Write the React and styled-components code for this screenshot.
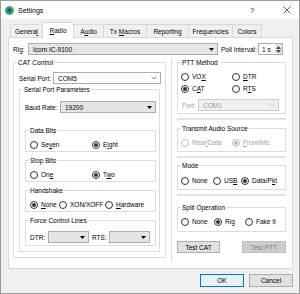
import React from 'react';
import styled, { createGlobalStyle } from 'styled-components';

const Global = createGlobalStyle`
  html, body { margin: 0; padding: 0; background: #fff; }
  body { font-family: "Liberation Sans", Arial, sans-serif; font-size: 6.5px; color: #000; }
  * { box-sizing: border-box; }
`;

const Window = styled.div`
  width: 300px; height: 294px; border: 1px solid #9c9c9c;
  display: flex; flex-direction: column; background: #f0f0f0;
`;
const TitleBar = styled.div`
  height: 18px; flex: none; background: #fff; display: flex; align-items: center; padding-left: 4px;
`;
const TitleText = styled.span`
  margin-left: 4px; font-size: 7px; color: #000;
`;
const TitleBtn = styled.span`
  width: ${p => p.$w}px; margin-left: ${p => p.$ml || 0}px; margin-right: ${p => p.$mr || 0}px;
  display: flex; align-items: center; justify-content: center; font-size: 7.5px; color: #222;
`;
const Spacer = styled.div` flex: 1; `;

const Body = styled.div`
  flex: 1; display: flex; flex-direction: column; padding: 3px 6px 0 7px;
`;
const TabBar = styled.div`
  height: 16px; display: flex; align-items: flex-end; padding-left: 2px;
  margin-bottom: -1px; position: relative; z-index: 1;
`;
const Tab = styled.div`
  width: ${p => p.$w}px; height: ${p => (p.$active ? 16 : 14)}px;
  margin-left: -1px; &:first-child { margin-left: 0; }
  border: 1px solid #d9d9d9; border-bottom: ${p => (p.$active ? 'none' : '1px solid #d9d9d9')};
  background: ${p => (p.$active ? '#fff' : '#f0f0f0')};
  position: relative; z-index: ${p => (p.$active ? 2 : 1)};
  display: flex; align-items: center; justify-content: center;
  padding-bottom: ${p => (p.$active ? 1 : 0)}px; white-space: nowrap;
`;
const Pane = styled.div`
  background: #fff; border: 1px solid #d9d9d9; padding: 5px 6px 6px 4px;
  display: flex; flex-direction: column;
`;
const Row = styled.div`
  display: flex; align-items: center; height: ${p => p.$h || 12}px;
  margin-top: ${p => p.$mt || 0}px; padding-left: ${p => p.$pl || 0}px;
`;
const Label = styled.span`
  width: ${p => p.$w}px; flex: none; margin-left: ${p => p.$ml || 0}px; white-space: nowrap;
  color: ${p => (p.$disabled ? '#a0a0a0' : '#000')};
`;
const ComboBox = styled.div`
  height: ${p => p.$h || 12}px; ${p => (p.$w ? `width: ${p.$w}px; flex: none;` : 'flex: 1;')}
  margin-right: ${p => p.$mr || 0}px;
  display: flex; align-items: center; justify-content: space-between; padding: 0 3px 0 4px;
  border: 1px solid ${p => (p.$kind === 'disabled' ? '#cccccc' : '#adadad')};
  background: ${p => (p.$kind === 'edit' ? '#fff' : p.$kind === 'disabled' ? '#f0f0f0' : '#e5e5e5')};
  color: ${p => (p.$kind === 'disabled' ? '#9a9a9a' : '#000')}; white-space: nowrap;
`;
const SpinBox = styled.div`
  width: 25px; height: 12px; flex: none; margin-right: 3px; border: 1px solid #adadad; background: #fff;
  display: flex; align-items: center; justify-content: space-between; padding-left: 3px;
`;
const SpinArrows = styled.div`
  width: 7px; height: 10px; background: #e6e6e6; display: flex; flex-direction: column;
  align-items: center; justify-content: space-around; padding: 1px 0;
`;

const MainRow = styled.div` display: flex; margin-top: 3px; align-items: flex-start; `;
const LeftCol = styled.div` width: 153px; flex: none; display: flex; flex-direction: column; `;
const RightCol = styled.div`
  flex: 1; margin-left: 5px; border-left: 1px solid #dcdcdc; padding: 0 0 9px 5px;
  display: flex; flex-direction: column; align-self: stretch;
`;

const Group = styled.fieldset`
  margin: ${p => p.$m || '0'}; padding: 0; border: 1px solid #dcdcdc; min-width: 0;
`;
const Legend = styled.legend`
  padding: 0 1px; margin-left: 3px; height: 9px; line-height: 9px; white-space: nowrap;
`;
const GroupBody = styled.div`
  padding: ${p => p.$pad};
  display: flex; flex-direction: column;
`;
const Section = styled.div`
  padding-bottom: 4px; border-bottom: 2px solid #e3e3e3; margin-top: ${p => p.$mt || 0}px;
`;
const RadioRow = styled.div`
  display: flex; align-items: center; height: 10px; margin-top: ${p => p.$mt || 0}px;
`;
const RadioOpt = styled.label`
  display: flex; align-items: center; height: 10px; line-height: 10px; flex: none;
  ${p => (p.$w ? `width: ${p.$w}px;` : '')}
  color: ${p => (p.$disabled ? '#a0a0a0' : '#000')}; white-space: nowrap;
`;
const Circle = styled.span`
  width: 8px; height: 8px; border-radius: 50%; flex: none; margin-right: 3px; background: #fff;
  border: 1px solid ${p => (p.$disabled ? '#bcbcbc' : '#333')};
  display: flex; align-items: center; justify-content: center;
  &::after {
    content: ''; width: 4px; height: 4px; border-radius: 50%;
    background: ${p => (p.$checked ? (p.$disabled ? '#bcbcbc' : '#333') : 'transparent')};
  }
`;
const U = styled.span` text-decoration: underline; `;

const ButtonRow = styled.div`
  display: flex; justify-content: ${p => p.$justify || 'flex-end'}; gap: 5px; margin-top: ${p => p.$mt || 0}px;
`;
const Button = styled.div`
  width: ${p => p.$w}px; height: ${p => p.$h || 12}px; display: flex; align-items: center; justify-content: center;
  border: 1px solid ${p => (p.$default ? '#0078d7' : p.$disabled ? '#bfbfbf' : '#adadad')};
  background: ${p => (p.$default ? '#e5f1fb' : p.$disabled ? '#cccccc' : '#e1e1e1')};
  color: ${p => (p.$disabled ? '#838383' : '#000')}; white-space: nowrap;
`;

const Tri = ({ up, color = '#000' }) => (
  <svg width="5" height="3" viewBox="0 0 5 3">
    <polygon points={up ? '0,3 5,3 2.5,0' : '0,0 5,0 2.5,3'} fill={color} />
  </svg>
);
const Chevron = ({ color = '#707070' }) => (
  <svg width="6" height="4" viewBox="0 0 6 4">
    <polyline points="0.5,0.5 3,3 5.5,0.5" fill="none" stroke={color} strokeWidth="0.8" />
  </svg>
);

const Combo = ({ kind = 'gray', text = '', ...rest }) => (
  <ComboBox $kind={kind} {...rest}>
    <span>{text}</span>
    {kind === 'gray' ? <Tri /> : <Chevron color={kind === 'disabled' ? '#c4c4c4' : '#707070'} />}
  </ComboBox>
);

const Radio = ({ children, checked, disabled, w }) => (
  <RadioOpt $w={w} $disabled={disabled}>
    <Circle $checked={checked} $disabled={disabled} />
    <span>{children}</span>
  </RadioOpt>
);

const AppIcon = () => (
  <svg width="9" height="9" viewBox="0 0 9 9">
    <defs>
      <radialGradient id="ic" cx="50%" cy="50%" r="50%">
        <stop offset="0" stopColor="#0d3f8f" />
        <stop offset="0.45" stopColor="#1f6fd6" />
        <stop offset="0.7" stopColor="#28b04a" />
        <stop offset="1" stopColor="#5bc24f" />
      </radialGradient>
    </defs>
    <circle cx="4.5" cy="4.5" r="4.5" fill="url(#ic)" />
  </svg>
);
const CloseIcon = () => (
  <svg width="8" height="8" viewBox="0 0 8 8">
    <path d="M0.5 0.5 L7.5 7.5 M7.5 0.5 L0.5 7.5" stroke="#333" strokeWidth="0.8" />
  </svg>
);

const tabs = [
  ['General', 33], ['Radio', 32], ['Audio', 31], ['Tx Macros', 44],
  ['Reporting', 43], ['Frequencies', 45], ['Colors', 30],
];
const tabLabel = {
  General: <>Genera<U>l</U></>,
  Radio: <><U>R</U>adio</>,
  Audio: <>A<U>u</U>dio</>,
  'Tx Macros': <>Tx <U>M</U>acros</>,
  Reporting: 'Reporting',
  Frequencies: 'Frequencies',
  Colors: 'Colors',
};

export default function App() {
  return (
    <>
      <Global />
      <Window>
        <TitleBar>
          <AppIcon />
          <TitleText>Settings</TitleText>
          <Spacer />
          <TitleBtn $w={14} $mr={16}>?</TitleBtn>
          <TitleBtn $w={24}><CloseIcon /></TitleBtn>
        </TitleBar>
        <Body>
          <TabBar>
            {tabs.map(([t, w]) => (
              <Tab key={t} $w={w} $active={t === 'Radio'}><span>{tabLabel[t]}</span></Tab>
            ))}
          </TabBar>
          <Pane>
            <Row>
              <Label $w={15}>Rig:</Label>
              <Combo text="Icom IC-9100" />
              <Label $w={37} $ml={3}>Poll Interval:</Label>
              <SpinBox>
                <span>1 s</span>
                <SpinArrows><Tri up color="#444" /><Tri color="#444" /></SpinArrows>
              </SpinBox>
            </Row>
            <MainRow>
              <LeftCol>
                <Group>
                  <Legend>CAT Control</Legend>
                  <GroupBody $pad="5px 4px 5px 5px">
                    <Row>
                      <Label $w={34}>Serial Port:</Label>
                      <Combo kind="edit" text="COM5" />
                    </Row>
                    <Group $m="1px 1px 0 0">
                      <Legend>Serial Port Parameters</Legend>
                      <GroupBody $pad="7px 1px 5px 5px">
                        <Row>
                          <Label $w={35}>Baud Rate:</Label>
                          <Combo text="19200" $mr={2} />
                        </Row>
                        <Group $m="13px 2px 0 0">
                          <Legend>Data Bits</Legend>
                          <GroupBody $pad="5px 0 1px 4px">
                            <RadioRow>
                              <Radio w={62}>Se<U>v</U>en</Radio>
                              <Radio checked>E<U>i</U>ght</Radio>
                            </RadioRow>
                          </GroupBody>
                        </Group>
                        <Group $m="4px 2px 0 0">
                          <Legend>Stop Bits</Legend>
                          <GroupBody $pad="5px 0 1px 4px">
                            <RadioRow>
                              <Radio w={62}>On<U>e</U></Radio>
                              <Radio checked>T<U>w</U>o</Radio>
                            </RadioRow>
                          </GroupBody>
                        </Group>
                        <Group $m="4px 2px 0 0">
                          <Legend>Handshake</Legend>
                          <GroupBody $pad="5px 0 1px 4px">
                            <RadioRow>
                              <Radio w={29} checked><U>N</U>one</Radio>
                              <Radio w={46}>XON/XOFF</Radio>
                              <Radio><U>H</U>ardware</Radio>
                            </RadioRow>
                          </GroupBody>
                        </Group>
                        <Group $m="4px 2px 0 0">
                          <Legend>Force Control Lines</Legend>
                          <GroupBody $pad="6px 3px 2px 4px">
                            <Row>
                              <Label $w={18}>DTR:</Label>
                              <Combo $w={41} />
                              <Label $w={17} $ml={3}>RTS:</Label>
                              <Combo $w={41} />
                            </Row>
                          </GroupBody>
                        </Group>
                      </GroupBody>
                    </Group>
                  </GroupBody>
                </Group>
              </LeftCol>
              <RightCol>
                <Section>
                  <Group>
                    <Legend>PTT Method</Legend>
                    <GroupBody $pad="5px 6px 2px 3px">
                      <RadioRow>
                        <Radio w={51}>VO<U>X</U></Radio>
                        <Radio><U>D</U>TR</Radio>
                      </RadioRow>
                      <RadioRow $mt={2}>
                        <Radio w={51} checked>C<U>A</U>T</Radio>
                        <Radio>R<U>T</U>S</Radio>
                      </RadioRow>
                      <Row $mt={5}>
                        <Label $w={16} $ml={1} $disabled>Port:</Label>
                        <Combo kind="disabled" text="COM1" />
                      </Row>
                    </GroupBody>
                  </Group>
                </Section>
                <Section $mt={4}>
                  <Group>
                    <Legend>Transmit Audio Source</Legend>
                    <GroupBody $pad="5px 0 3px 3px">
                      <RadioRow>
                        <Radio w={51} disabled>Rear<U>/</U>Data</Radio>
                        <Radio disabled checked><U>F</U>ront/Mic</Radio>
                      </RadioRow>
                    </GroupBody>
                  </Group>
                </Section>
                <Section $mt={3}>
                  <Group>
                    <Legend>Mode</Legend>
                    <GroupBody $pad="6px 0 3px 3px">
                      <RadioRow>
                        <Radio w={32}>None</Radio>
                        <Radio w={28}>US<U>B</U></Radio>
                        <Radio checked>Data/P<U>k</U>t</Radio>
                      </RadioRow>
                    </GroupBody>
                  </Group>
                </Section>
                <Group $m="7px 0 0 0">
                  <Legend>Split Operation</Legend>
                  <GroupBody $pad="5px 0 4px 3px">
                    <RadioRow>
                      <Radio w={33}>None</Radio>
                      <Radio w={31} checked>Rig</Radio>
                      <Radio>Fake It</Radio>
                    </RadioRow>
                  </GroupBody>
                </Group>
                <ButtonRow $justify="space-between" $mt={9}>
                  <Button $w={43}>Test CAT</Button>
                  <Button $w={44} $disabled>Test PTT</Button>
                </ButtonRow>
              </RightCol>
            </MainRow>
          </Pane>
          <ButtonRow $mt={5}>
            <Button $w={44} $h={13} $default>OK</Button>
            <Button $w={44} $h={13}>Cancel</Button>
          </ButtonRow>
        </Body>
      </Window>
    </>
  );
}
